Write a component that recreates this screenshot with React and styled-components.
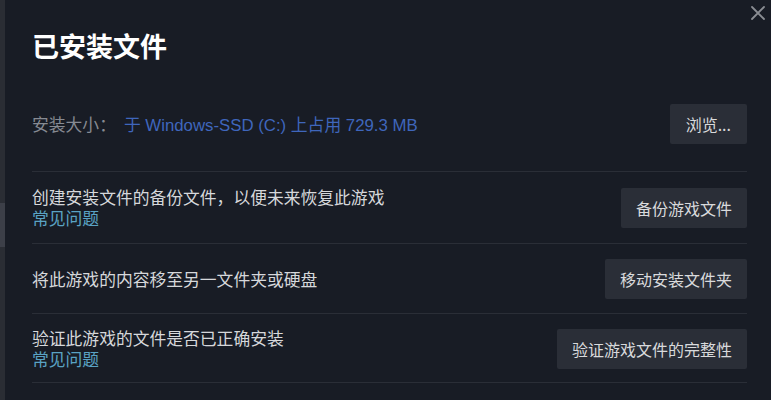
import React from "react";
import styled, { createGlobalStyle } from "styled-components";

const Global = createGlobalStyle`
  html, body { margin: 0; padding: 0; background: #181c25; }
  body { font-family: Arial, "Liberation Sans", "Noto Sans CJK SC", sans-serif; }
`;

const Page = styled.div`
  display: flex;
  width: 771px;
  height: 400px;
  background: #181c25;
  overflow: hidden;
`;

const SideStrip = styled.div`
  width: 5px;
  flex: none;
  background: #2a2d34;
  display: flex;
  flex-direction: column;
`;

const StripThumb = styled.div`
  margin-top: 203px;
  height: 44px;
  background: #3c3f48;
`;

const Dialog = styled.div`
  position: relative;
  flex: 1;
  padding: 28px 24px 0 27px;
  display: flex;
  flex-direction: column;
`;

const Close = styled.button`
  position: absolute;
  top: 4px;
  right: 4px;
  width: 18px;
  height: 18px;
  padding: 0;
  border: none;
  background: transparent;
  display: flex;
  align-items: center;
  justify-content: center;
`;

const Title = styled.h1`
  margin: 0 0 40px;
  font-family: "Noto Sans CJK SC", sans-serif;
  font-size: 27px;
  font-weight: 700;
  line-height: 36px;
  color: #ffffff;
`;

const Row = styled.div`
  display: flex;
  align-items: center;
  justify-content: space-between;
  padding: ${(p) => p.$pad || "15px 0 14px"};
  border-bottom: 1px solid #2a2e37;
`;

const TextCol = styled.div`
  display: flex;
  flex-direction: column;
  font-family: "Noto Sans CJK SC", sans-serif;
  font-size: 16.8px;
  line-height: 21px;
`;

const Desc = styled.span`
  display: block;
  height: 21px;
  color: #d6d8db;
`;

const Link = styled.a`
  display: block;
  height: 21px;
  color: #5aa3c4;
  cursor: pointer;
`;

const SizeLine = styled.div`
  display: flex;
  align-items: center;
  gap: 8px;
  font-size: 16.8px;
  font-family: "Noto Sans CJK SC", sans-serif;
`;

const Label = styled.span`
  color: #868a92;
`;

const Value = styled.span`
  color: #3f66bc;
  font-family: "Liberation Sans", "Noto Sans CJK SC", sans-serif;
`;

const Button = styled.button`
  height: 40px;
  padding: 0 ${(p) => p.$px || "15px"};
  border: none;
  border-radius: 2px;
  background: #2a2e37;
  color: #d9dadc;
  font-family: "Noto Sans CJK SC", sans-serif;
  font-size: 16px;
  white-space: nowrap;
  cursor: pointer;
`;

const XIcon = () => (
  <svg width="14" height="14" viewBox="0 0 14 14">
    <path d="M1 1L13 13M13 1L1 13" stroke="#8a8d93" strokeWidth="1.8" strokeLinecap="round" />
  </svg>
);

export default function App() {
  return (
    <Page>
      <Global />
      <SideStrip>
        <StripThumb />
      </SideStrip>
      <Dialog>
        <Close aria-label="close">
          <XIcon />
        </Close>
        <Title>已安装文件</Title>
        <Row $pad="0 0 27px">
          <SizeLine>
            <Label>安装大小：</Label>
            <Value>于 Windows-SSD (C:) 上占用 729.3 MB</Value>
          </SizeLine>
          <Button $px="16px">浏览...</Button>
        </Row>
        <Row>
          <TextCol>
            <Desc>创建安装文件的备份文件，以便未来恢复此游戏</Desc>
            <Link>常见问题</Link>
          </TextCol>
          <Button>备份游戏文件</Button>
        </Row>
        <Row>
          <TextCol>
            <Desc>将此游戏的内容移至另一文件夹或硬盘</Desc>
          </TextCol>
          <Button>移动安装文件夹</Button>
        </Row>
        <Row $pad="14px 0 12px">
          <TextCol>
            <Desc>验证此游戏的文件是否已正确安装</Desc>
            <Link>常见问题</Link>
          </TextCol>
          <Button>验证游戏文件的完整性</Button>
        </Row>
      </Dialog>
    </Page>
  );
}
